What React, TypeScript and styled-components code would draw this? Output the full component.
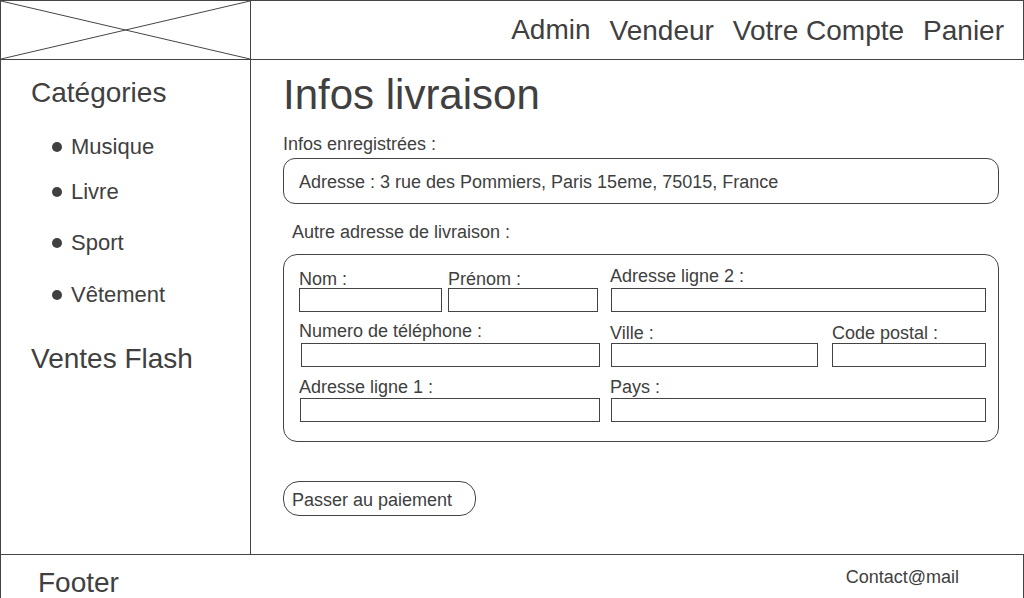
import React from "react";
import styled, { createGlobalStyle } from "styled-components";

const GlobalStyle = createGlobalStyle`
  html, body {
    margin: 0;
    padding: 0;
    background: #ffffff;
  }
  * {
    box-sizing: border-box;
  }
  body {
    font-family: "Liberation Sans", Arial, sans-serif;
    color: #404040;
  }
`;

const LINE = "#444444";

const Page = styled.div`
  width: 1024px;
  height: 598px;
  overflow: hidden;
  display: flex;
  flex-direction: column;
`;

const Header = styled.header`
  height: 60px;
  flex-shrink: 0;
  display: flex;
  align-items: stretch;
  border: 1px solid ${LINE};
`;

const Logo = styled.div`
  width: 250px;
  border-right: 1px solid ${LINE};
  svg {
    display: block;
    width: 100%;
    height: 100%;
  }
`;

const Nav = styled.nav`
  flex: 1;
  display: flex;
  justify-content: flex-end;
  align-items: center;
  gap: 19px;
  padding-right: 19px;
`;

const NavItem = styled.span<{ $lift?: number }>`
  font-size: 28px;
  line-height: 32px;
  margin-top: ${(p) => (p.$lift ? -p.$lift : 2)}px;
`;

const Body = styled.div`
  flex: 1;
  display: flex;
  min-height: 0;
`;

const Sidebar = styled.aside`
  width: 251px;
  flex-shrink: 0;
  border-left: 1px solid ${LINE};
  border-right: 1px solid ${LINE};
  padding: 17px 0 0 30px;
`;

const SideTitle = styled.div<{ $top?: number }>`
  font-size: 28px;
  line-height: 32px;
  margin-top: ${(p) => p.$top ?? 0}px;
`;

const CatList = styled.ul`
  list-style: none;
  margin: 0;
  padding: 0;
`;

const CatItem = styled.li<{ $top: number }>`
  display: flex;
  align-items: center;
  gap: 9px;
  margin-top: ${(p) => p.$top}px;
  padding-left: 21px;
  font-size: 22px;
  line-height: 26px;
  &::before {
    content: "";
    width: 10px;
    height: 10px;
    border-radius: 50%;
    background: #404040;
  }
`;

const Main = styled.main`
  flex: 1;
  padding: 11px 25px 0 32px;
`;

const Title = styled.h1`
  margin: 0;
  font-size: 42px;
  font-weight: normal;
  line-height: 48px;
`;

const Caption = styled.div<{ $top: number; $indent?: number }>`
  font-size: 18px;
  line-height: 20px;
  margin-top: ${(p) => p.$top}px;
  padding-left: ${(p) => p.$indent ?? 0}px;
`;

const SavedBox = styled.div`
  margin-top: 4px;
  height: 46px;
  border: 1px solid ${LINE};
  border-radius: 12px;
  display: flex;
  align-items: center;
  padding: 2px 0 0 15px;
  font-size: 18px;
`;

const FormBox = styled.div`
  margin-top: 12px;
  height: 188px;
  border: 1px solid ${LINE};
  border-radius: 14px;
  padding: 13px 11px 0 15px;
  display: grid;
  grid-template-columns: 301px 375px;
  grid-auto-rows: 44px;
  column-gap: 11px;
  row-gap: 11px;
`;

const Cell = styled.div<{ $gap?: number }>`
  display: flex;
  gap: ${(p) => p.$gap ?? 0}px;
`;

const Field = styled.label<{ $w?: number; $pad?: number }>`
  display: flex;
  flex-direction: column;
  width: ${(p) => (p.$w ? `${p.$w}px` : "100%")};
  padding-left: ${(p) => p.$pad ?? 0}px;
`;

const FieldLabel = styled.span<{ $shift?: number; $back?: number }>`
  font-size: 18px;
  line-height: 20px;
  height: 20px;
  white-space: nowrap;
  margin-left: ${(p) => -(p.$back ?? 0)}px;
  transform: translateY(${(p) => p.$shift ?? 0}px);
`;

const Input = styled.input`
  height: 24px;
  width: 100%;
  margin: 0;
  border: 1px solid ${LINE};
  border-radius: 0;
  background: #fff;
  outline: none;
`;

const PayButton = styled.button`
  margin-top: 39px;
  height: 35px;
  width: 193px;
  border: 1px solid ${LINE};
  border-radius: 16px;
  background: #fff;
  color: #404040;
  font-family: "Liberation Sans", Arial, sans-serif;
  font-size: 18px;
  text-align: left;
  padding: 3px 0 0 8px;
`;

const Footer = styled.footer`
  height: 44px;
  flex-shrink: 0;
  border: 1px solid ${LINE};
  border-bottom: none;
  display: flex;
  justify-content: space-between;
  align-items: flex-start;
  padding: 12px 64px 0 37px;
`;

const FooterTitle = styled.span`
  font-size: 28px;
  line-height: 32px;
`;

const Contact = styled.span`
  font-size: 18px;
  line-height: 20px;
`;

const categories = [
  { name: "Musique", top: 25 },
  { name: "Livre", top: 19 },
  { name: "Sport", top: 25 },
  { name: "Vêtement", top: 26 },
];

const App: React.FC = () => {
  return (
    <Page>
      <GlobalStyle />
      <Header>
        <Logo>
          <svg viewBox="0 0 250 58" preserveAspectRatio="none">
            <line x1="0" y1="0" x2="250" y2="58" stroke={LINE} strokeWidth="1" />
            <line x1="0" y1="58" x2="250" y2="0" stroke={LINE} strokeWidth="1" />
          </svg>
        </Logo>
        <Nav>
          <NavItem $lift={1}>Admin</NavItem>
          <NavItem>Vendeur</NavItem>
          <NavItem>Votre Compte</NavItem>
          <NavItem>Panier</NavItem>
        </Nav>
      </Header>

      <Body>
        <Sidebar>
          <SideTitle>Catégories</SideTitle>
          <CatList>
            {categories.map((c) => (
              <CatItem key={c.name} $top={c.top}>
                {c.name}
              </CatItem>
            ))}
          </CatList>
          <SideTitle $top={35}>Ventes Flash</SideTitle>
        </Sidebar>

        <Main>
          <Title>Infos livraison</Title>
          <Caption $top={15}>Infos enregistrées :</Caption>
          <SavedBox>Adresse : 3 rue des Pommiers, Paris 15eme, 75015, France</SavedBox>
          <Caption $top={18} $indent={9}>
            Autre adresse de livraison :
          </Caption>
          <FormBox>
            <Cell $gap={6}>
              <Field $w={143}>
                <FieldLabel $shift={1}>Nom :</FieldLabel>
                <Input />
              </Field>
              <Field $w={150}>
                <FieldLabel $shift={1}>Prénom :</FieldLabel>
                <Input />
              </Field>
            </Cell>
            <Cell>
              <Field>
                <FieldLabel $shift={-2} $back={1}>Adresse ligne 2 :</FieldLabel>
                <Input />
              </Field>
            </Cell>
            <Cell>
              <Field $pad={2}>
                <FieldLabel $shift={-2} $back={2}>Numero de téléphone :</FieldLabel>
                <Input />
              </Field>
            </Cell>
            <Cell $gap={14}>
              <Field $w={207}>
                <FieldLabel $back={1}>Ville :</FieldLabel>
                <Input />
              </Field>
              <Field $w={154}>
                <FieldLabel>Code postal :</FieldLabel>
                <Input />
              </Field>
            </Cell>
            <Cell>
              <Field $pad={1}>
                <FieldLabel $shift={-1} $back={1}>Adresse ligne 1 :</FieldLabel>
                <Input />
              </Field>
            </Cell>
            <Cell>
              <Field>
                <FieldLabel $shift={-1} $back={1}>Pays :</FieldLabel>
                <Input />
              </Field>
            </Cell>
          </FormBox>
          <PayButton>Passer au paiement</PayButton>
        </Main>
      </Body>

      <Footer>
        <FooterTitle>Footer</FooterTitle>
        <Contact>Contact@mail</Contact>
      </Footer>
    </Page>
  );
};

export default App;
